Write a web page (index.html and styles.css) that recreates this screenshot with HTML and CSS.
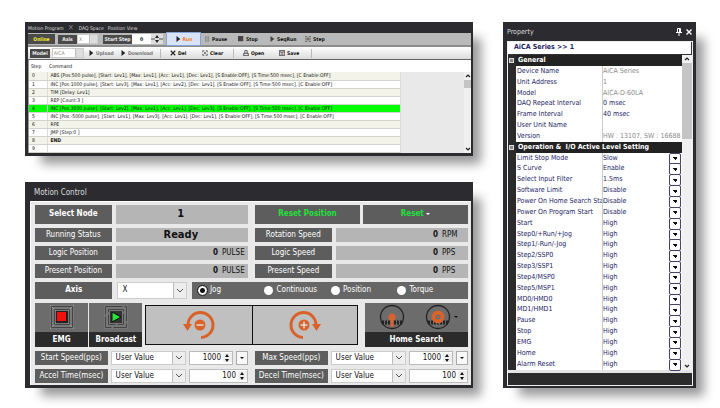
FILE: index.html
```html
<!DOCTYPE html>
<html lang="en">
<head>
<meta charset="utf-8">
<title>Motion Program</title>
<link rel="stylesheet" href="styles.css">
</head>
<body>
<main class="workspace">
  <div class="left">
    <section class="panel program">
      <nav class="tabs"><a href="#program">Motion Program</a><span class="tab-close">×</span><a href="#daq">DAQ Space</a><a href="#position">Position View</a></nav>
      <div class="toolbar toolbar-run">
        <span class="tag online">Online</span>
        <label class="tag tag-axis" for="axis-top">Axis</label>
        <span class="pick pick-axis"><select id="axis-top" class="dim"><option>X</option></select></span>
        <label class="tag tag-step" for="start-step">Start Step</label>
        <input id="start-step" class="step-input" type="text" value="0">
        <span class="stepper"><svg viewBox="0 0 12 10"><path d="M0 5h4M8 5h4" stroke="#555"/><path d="M4 4l2-3 2 3zM4 6l2 3 2-3z" fill="#222"/></svg></span>
        <button class="tool run"><svg viewBox="0 0 8 8"><path d="M2 0l5 4-5 4z" fill="#222"/></svg>Run</button>
        <button class="tool w-pause"><svg viewBox="0 0 8 8"><path d="M2.500 0v8M5.500 0v8" stroke="#666"/></svg>Pause</button>
        <button class="tool w-stop"><svg viewBox="0 0 8 8"><path d="M0 0h7v7H0z" fill="#444"/></svg>Stop</button>
        <button class="tool w-seq"><svg viewBox="0 0 8 8"><path d="M2 0l5 4-5 4z" fill="#444"/></svg>SeqRun</button>
        <button class="tool"><svg viewBox="0 0 8 8"><path d="M0 1h3M5 1h3M0 4h8M0 7h3M5 7h3M4 2v4" stroke="#444" fill="none"/></svg>Step</button>
      </div>
      <div class="toolbar toolbar-file">
        <label class="tag tag-model" for="model">Model</label>
        <span class="pick pick-model"><select id="model" class="dim"><option>AiCA</option></select></span>
        <button class="tool muted w-up"><svg viewBox="0 0 8 8"><path d="M2 0l5 4-5 4z" fill="#222"/></svg>Upload</button>
        <button class="tool muted w-down"><svg viewBox="0 0 8 8"><path d="M2 0l5 4-5 4z" fill="#222"/></svg>Download</button>
        <i class="sep"></i>
        <button class="tool w-del"><svg viewBox="0 0 8 8"><path d="M1 1l6 6M7 1L1 7" stroke="#222" stroke-width="1.500"/></svg>Del</button>
        <button class="tool w-clear"><svg viewBox="0 0 8 8"><path d="M1 3V1h2M5 1h2v2M7 5v2H5M3 7H1V5M3 3l2 2M5 3L3 5" stroke="#333" fill="none"/></svg>Clear</button>
        <i class="sep"></i>
        <button class="tool w-open"><svg viewBox="0 0 8 8"><path d="M2.500 4V.5h3V4M1 4.500h6M1.500 4L.5 7.500h7L6.500 4" stroke="#333" fill="none"/></svg>Open</button>
        <button class="tool w-save"><svg viewBox="0 0 8 8"><path d="M.5.5h7v7h-7zM2.500.5v3h3v-3M2 5.500h4" stroke="#333" fill="none"/></svg>Save</button>
        <i class="sep"></i>
      </div>
      <div class="listing">
        <table class="steps">
          <thead><tr><th>Step</th><th>Command</th></tr></thead>
          <tbody>
            <tr><td>0</td><td>ABS [Pos:500 pulse], [Start: Lev1], [Max: Lev1], [Acc: Lev1], [Dec: Lev1], [S Enable:OFF], [S Time:500 msec], [C Enable:OFF]</td></tr>
            <tr><td>1</td><td>INC [Pos:1000 pulse], [Start: Lev3], [Max: Lev1], [Acc: Lev2], [Dec: Lev1], [S Enable:OFF], [S Time:500 msec], [C Enable:OFF]</td></tr>
            <tr><td>2</td><td>TIM [Delay: Lev1]</td></tr>
            <tr><td>3</td><td>REP [Count:3 ]</td></tr>
            <tr class="current"><td>4</td><td>INC [Pos:3000 pulse], [Start: Lev2], [Max: Lev1], [Acc: Lev1], [Dec: Lev3], [S Enable:OFF], [S Time:500 msec], [C Enable:OFF]</td></tr>
            <tr><td>5</td><td>INC [Pos:-5000 pulse], [Start: Lev1], [Max: Lev3], [Acc: Lev1], [Dec: Lev1], [S Enable:OFF], [S Time:500 msec], [C Enable:OFF]</td></tr>
            <tr><td>6</td><td>RPE</td></tr>
            <tr><td>7</td><td>JMP [Step:0 ]</td></tr>
            <tr><td>8</td><td><b>END</b></td></tr>
            <tr><td>9</td><td></td></tr>
          </tbody>
        </table>
        <div class="blank"></div>
        <div class="scroll scroll-list">
          <svg viewBox="0 0 8 8"><path d="M2 5l2-2 2 2" stroke="#222" fill="none" stroke-width="1.200"/></svg>
          <span class="thumb"></span>
          <svg viewBox="0 0 8 8"><path d="M2 3l2 2 2-2" stroke="#222" fill="none" stroke-width="1.200"/></svg>
        </div>
      </div>
    </section>

    <section class="panel motion">
      <h2 class="motion-title">Motion Control</h2>
      <div class="motion-body">
        <div class="halves tall">
          <div class="pair"><span class="name strong">Select Node</span><output class="val big">1</output></div>
          <div class="resets"><button class="reset">Reset Position</button><button class="reset">Reset <i class="caret light"></i></button></div>
        </div>
        <div class="halves">
          <div class="pair"><span class="name">Running Status</span><output class="val big">Ready</output></div>
          <div class="pair"><span class="name">Rotation Speed</span><output class="val"><b>0</b><span class="unit">RPM</span></output></div>
        </div>
        <div class="halves">
          <div class="pair"><span class="name">Logic Position</span><output class="val"><b>0</b><span class="unit">PULSE</span></output></div>
          <div class="pair"><span class="name">Logic Speed</span><output class="val"><b>0</b><span class="unit">PPS</span></output></div>
        </div>
        <div class="halves">
          <div class="pair"><span class="name">Present Position</span><output class="val"><b>0</b><span class="unit">PULSE</span></output></div>
          <div class="pair"><span class="name">Present Speed</span><output class="val"><b>0</b><span class="unit">PPS</span></output></div>
        </div>
        <div class="axis-row">
          <label class="name strong" for="axis">Axis</label>
          <span class="pick"><select id="axis"><option>X</option></select></span>
          <div class="modes">
            <label><input type="radio" name="mode" checked>Jog</label>
            <label><input type="radio" name="mode">Continuous</label>
            <label><input type="radio" name="mode">Position</label>
            <label><input type="radio" name="mode">Torque</label>
          </div>
        </div>
        <div class="action-row">
          <button class="act"><span class="art"><svg class="ic26" viewBox="0 0 26 26"><path d="M1 1h24v24H1z" fill="#777"/><path d="M1 1l24 24M25 1L1 25" stroke="#999" /><path d="M2.500 2.500h21v21h-21zM5.500 5.500h15v15h-15z" fill="none" stroke="#444"/><path d="M7 7h12v12H7z" fill="#222"/><path d="M8 8h9v9H8z" fill="#f01010"/></svg></span><span class="cap">EMG</span></button>
          <button class="act"><span class="art"><svg class="ic26" viewBox="0 0 26 26"><path d="M1 1h24v24H1z" fill="#777"/><path d="M2.500 2.500h21v21h-21zM5.500 5.500h15v15h-15z" fill="none" stroke="#444" stroke-dasharray="17 2"/><path d="M7 7h12v12H7z" fill="#333"/><path d="M9 8l9 5-9 5z" fill="#2de03a" stroke="#111"/></svg></span><span class="cap">Broadcast</span></button>
          <div class="jog">
            <button aria-label="Jog minus"><svg class="ic34" viewBox="0 0 34 34"><path d="M6 17A12.500 12.500 0 1 1 19 29.500" fill="none" stroke="#d9622b" stroke-width="3"/><path d="M1 16l9 0-4.500 7z" fill="#d9622b"/><circle cx="18" cy="17" r="5.500" fill="#d9622b"/><path d="M14.500 17h7" stroke="#ddd" stroke-width="1.500"/></svg></button>
            <button aria-label="Jog plus"><svg class="ic34" viewBox="0 0 34 34"><path d="M28 17A12.500 12.500 0 1 0 15 29.500" fill="none" stroke="#d9622b" stroke-width="3"/><path d="M24 16h9l-4.500 7z" fill="#d9622b"/><circle cx="16" cy="17" r="5.500" fill="#d9622b"/><path d="M12.500 17h7M16 13.500v7" stroke="#ddd" stroke-width="1.500"/></svg></button>
          </div>
          <div class="act home">
            <span class="art">
              <button aria-label="Home"><svg class="ic26" viewBox="0 0 26 26"><circle cx="13" cy="13" r="11.500" fill="none" stroke="#222" stroke-width="1.300"/><path d="M3 18.500h20" stroke="#222" stroke-width="4" stroke-dasharray="2 1"/><circle cx="13" cy="13" r="3.500" fill="#d9622b"/><path d="M11.500 14h3v9h-3z" fill="#d9622b"/></svg></button>
              <button aria-label="Home options"><svg class="ic26" viewBox="0 0 26 26"><circle cx="13" cy="13" r="11.500" fill="none" stroke="#222" stroke-width="1.300"/><path d="M3 18.500h20" stroke="#222" stroke-width="4" stroke-dasharray="2 1"/><circle cx="13" cy="13" r="4.500" fill="none" stroke="#d9622b" stroke-width="4"/><circle cx="13" cy="13" r="1" fill="#d9622b"/></svg></button>
              <i class="caret"></i>
            </span>
            <span class="cap">Home Search</span>
          </div>
        </div>
        <div class="halves speeds">
          <div class="speed"><label class="name" for="s1">Start Speed(pps)</label><span class="pick"><select id="s1"><option>User Value</option></select></span><span class="num"><input type="text" value="1000" aria-label="Start speed value"><i class="spin"></i></span><button class="more" aria-label="More"><i class="caret"></i></button></div>
          <div class="speed"><label class="name" for="s2">Max Speed(pps)</label><span class="pick"><select id="s2"><option>User Value</option></select></span><span class="num"><input type="text" value="1000" aria-label="Max speed value"><i class="spin"></i></span><button class="more" aria-label="More"><i class="caret"></i></button></div>
        </div>
        <div class="halves speeds">
          <div class="speed"><label class="name" for="s3">Accel Time(msec)</label><span class="pick"><select id="s3"><option>User Value</option></select></span><span class="num wide"><input type="text" value="100" aria-label="Accel time value"><i class="spin"></i></span></div>
          <div class="speed"><label class="name" for="s4">Decel Time(msec)</label><span class="pick"><select id="s4"><option>User Value</option></select></span><span class="num wide"><input type="text" value="100" aria-label="Decel time value"><i class="spin"></i></span></div>
        </div>
      </div>
    </section>
  </div>

  <section class="panel property">
    <header class="prop-title"><h2>Property</h2><svg viewBox="0 0 8 8"><path d="M2.500.5h3v4h-3zM1 4.500h6M4 5v3M4.500 1v3" stroke="#fff" fill="none"/></svg><svg viewBox="0 0 8 8"><path d="M1.500 1.500l5 5M6.500 1.500l-5 5" stroke="#fff" stroke-width="1.400"/></svg></header>
    <div class="prop-frame">
      <h3 class="prop-name">AiCA Series &gt;&gt; 1</h3>
      <div class="prop-main">
        <table class="props">
          <tbody>
            <tr class="group"><th colspan="2"><i class="fold"></i>General</th></tr>
            <tr class="ro"><th>Device Name</th><td>AiCA Series</td></tr>
            <tr class="ro"><th>Unit Address</th><td>1</td></tr>
            <tr class="ro"><th>Model</th><td>AICA-D-60LA</td></tr>
            <tr><th>DAQ Repeat Interval</th><td>0 msec</td></tr>
            <tr><th>Frame Interval</th><td>40 msec</td></tr>
            <tr><th>User Unit Name</th><td></td></tr>
            <tr class="ro"><th>Version</th><td>HW : 13107, SW : 16688</td></tr>
            <tr class="group"><th colspan="2"><i class="fold"></i>Operation &amp;&nbsp; I/O Active Level Setting</th></tr>
            <tr><th><label for="p1">Limit Stop Mode</label></th><td><select id="p1"><option>Slow</option></select></td></tr>
            <tr><th><label for="p2">S Curve</label></th><td><select id="p2"><option>Enable</option></select></td></tr>
            <tr><th><label for="p3">Select Input Filter</label></th><td><select id="p3"><option>1.5ms</option></select></td></tr>
            <tr><th><label for="p4">Software Limit</label></th><td><select id="p4"><option>Disable</option></select></td></tr>
            <tr><th><label for="p5">Power On Home Search Sta</label></th><td><select id="p5"><option>Disable</option></select></td></tr>
            <tr><th><label for="p6">Power On Program Start</label></th><td><select id="p6"><option>Disable</option></select></td></tr>
            <tr><th><label for="p7">Start</label></th><td><select id="p7"><option>High</option></select></td></tr>
            <tr><th><label for="p8">Step0/+Run/+Jog</label></th><td><select id="p8"><option>High</option></select></td></tr>
            <tr><th><label for="p9">Step1/-Run/-Jog</label></th><td><select id="p9"><option>High</option></select></td></tr>
            <tr><th><label for="p10">Step2/SSP0</label></th><td><select id="p10"><option>High</option></select></td></tr>
            <tr><th><label for="p11">Step3/SSP1</label></th><td><select id="p11"><option>High</option></select></td></tr>
            <tr><th><label for="p12">Step4/MSP0</label></th><td><select id="p12"><option>High</option></select></td></tr>
            <tr><th><label for="p13">Step5/MSP1</label></th><td><select id="p13"><option>High</option></select></td></tr>
            <tr><th><label for="p14">MD0/HMD0</label></th><td><select id="p14"><option>High</option></select></td></tr>
            <tr><th><label for="p15">MD1/HMD1</label></th><td><select id="p15"><option>High</option></select></td></tr>
            <tr><th><label for="p16">Pause</label></th><td><select id="p16"><option>High</option></select></td></tr>
            <tr><th><label for="p17">Stop</label></th><td><select id="p17"><option>High</option></select></td></tr>
            <tr><th><label for="p18">EMG</label></th><td><select id="p18"><option>High</option></select></td></tr>
            <tr><th><label for="p19">Home</label></th><td><select id="p19"><option>High</option></select></td></tr>
            <tr><th><label for="p20">Alarm Reset</label></th><td><select id="p20"><option>High</option></select></td></tr>
          </tbody>
        </table>
        <div class="scroll scroll-prop">
          <svg viewBox="0 0 8 8"><path d="M2 5l2-2 2 2" stroke="#222" fill="none" stroke-width="1.200"/></svg>
          <span class="thumb"></span>
          <svg viewBox="0 0 8 8"><path d="M2 3l2 2 2-2" stroke="#222" fill="none" stroke-width="1.200"/></svg>
        </div>
      </div>
      <footer class="prop-foot"></footer>
    </div>
  </section>
</main>
</body>
</html>
```
FILE: styles.css
```css
* { box-sizing: border-box; }
body {
  margin: 0;
  background: #fff;
  color: #111;
  font: 8px/10px "DejaVu Sans Condensed", "DejaVu Sans", sans-serif;
}
h2, h3 { margin: 0; font-size: inherit; font-weight: normal; }
button, input, select {
  margin: 0;
  padding: 0;
  border: 0;
  border-radius: 0;
  min-width: 0;
  background: none;
  color: inherit;
  font: inherit;
  appearance: none;
}
svg { flex: none; }
.workspace {
  display: grid;
  grid-template-columns: 448fr 193fr;
  gap: 30px;
  padding: 22px 24px 20px 25px;
}
.left { display: flex; flex-direction: column; gap: 26px; min-width: 0; }
.panel { background: #2b2b30; box-shadow: 12px 12px 10px -4px rgba(0, 0, 0, .4); min-width: 0; }

/* Program list */
.program { padding: 0 2px 3px 3px; font-size: 5px; line-height: 8px; }
.tabs { display: flex; align-items: center; height: 11px; color: #ddd; }
.tabs a { color: inherit; text-decoration: none; margin-right: 4px; }
.tab-close { margin-right: 5px; color: #888; font-size: 8px; }
.toolbar { display: flex; align-items: center; font-weight: bold; }
.toolbar > * { flex: none; }
.toolbar-run { height: 14px; background: #b9b9b9; border-bottom: 2px solid #8d8d8d; }
.toolbar-file { height: 13px; background: linear-gradient(#fff, #dcdcdc); border-bottom: 1px solid #666; padding-left: 2px; }
.tag { height: 9px; line-height: 9px; background: #4a4a4a; color: #eee; text-align: center; }
.online { width: 27px; height: 10px; line-height: 10px; color: #f4ee2a; margin-right: 3px; }
.tag-axis { width: 19px; }
.tag-step { width: 29px; }
.tag-model { width: 20px; margin-right: 2px; }
.pick { position: relative; display: flex; background: #fff; border: 1px solid #ccc; }
.pick select { width: 100%; padding-left: 4px; }
.pick::after {
  content: "";
  position: absolute;
  top: 0; right: 0; bottom: 0;
  width: 12px;
  pointer-events: none;
  border-left: 1px solid #bbb;
  background: linear-gradient(45deg, transparent 45%, #555 45% 60%, transparent 60%) 3px 50% / 3px 3px no-repeat, linear-gradient(-45deg, transparent 45%, #555 45% 60%, transparent 60%) 6px 50% / 3px 3px no-repeat, #eee;
}
.dim { color: #888; }
.toolbar .pick { height: 10px; line-height: 8px; }
.toolbar .pick select { padding-left: 1px; font-weight: normal; }
.toolbar .pick::after { width: 7px; background: #ddd; }
.pick-axis { width: 21px; margin-right: 5px; }
.pick-model { width: 32px; margin-right: 4px; }
.step-input { width: 19px; height: 10px; background: #fff; text-align: center; }
.stepper { display: flex; width: 12px; height: 10px; background: #ddd; margin-right: 4px; }
.tool { display: flex; align-items: center; gap: 2px; font-weight: bold; white-space: nowrap; height: 12px; }
.tool svg { width: 6px; height: 6px; }
.run { width: 33px; justify-content: center; background: #d8e4f6; outline: 1px solid #86a3d4; color: #f07e2c; margin-right: 4px; }
.w-pause { width: 34px; }
.w-stop { width: 31px; }
.w-seq { width: 36px; }
.muted { color: #777; }
.w-up { width: 32px; }
.w-down { width: 40px; }
.sep { width: 1px; height: 9px; background: #bbb; }
.w-del { width: 32px; margin-left: 9px; }
.w-clear { width: 31px; }
.w-open { width: 36px; margin-left: 9px; }
.w-save { width: 32px; }
.listing { display: grid; grid-template-columns: 373fr 63fr 7px; background: #fff; border-left: 1px solid #999; }
.steps { border-collapse: collapse; table-layout: fixed; width: 100%; white-space: nowrap; }
.steps th { height: 12px; padding: 0 0 0 2px; font-weight: normal; text-align: left; }
.steps th:first-child { width: 18px; }
.steps td { height: 8px; line-height: 7px; padding: 0 0 0 3px; border-bottom: 1px solid #d3d3cd; border-right: 1px solid #ddd; }
.steps tbody tr:nth-child(odd) { background: #f3f3e9; }
.steps tbody tr.current { background: #0f0; }
.blank { margin-top: 12px; background: #e9e9e9; }
.scroll { display: flex; flex-direction: column; align-items: center; justify-content: space-between; background: #f0f0f0; }
.scroll svg { width: 8px; height: 8px; }
.thumb { background: #c4c4c4; width: 100%; }
.scroll-list { margin-top: 12px; }
.scroll-list .thumb { height: 8px; margin-bottom: auto; }

/* Motion control */
.motion { padding: 0 2px 3px 5px; }
.motion-title { height: 19px; line-height: 21px; color: #ddd; padding-left: 4px; }
.motion-body { display: flex; flex-direction: column; gap: 4px; background: #e9e9e9; padding: 3px 3px 2px 4px; border-left: 1px solid #fff; border-top: 1px solid #fff; }
.halves { display: grid; grid-template-columns: 1fr 1fr; gap: 7px; height: 14px; }
.halves.tall { height: 19px; }
.pair { display: grid; grid-template-columns: 77fr 133fr; gap: 4px; }
.name { display: flex; align-items: center; justify-content: center; background: #5d5d5d; color: #fff; white-space: nowrap; min-width: 0; }
.strong { font-weight: bold; }
.val { display: flex; align-items: center; justify-content: flex-end; background: #b5b5b5; gap: 4px; padding-right: 2px; }
.big { justify-content: center; font-size: 11px; font-weight: bold; }
.unit { width: 24px; }
.resets { display: grid; grid-template-columns: 1fr 1fr; gap: 3px; }
.reset { background: #5d5d5d; color: #1fe03a; font-weight: bold; }
.caret { display: inline-block; border: 2px solid transparent; border-top-color: #111; border-bottom: 0; }
.light { border-top-color: #fff; vertical-align: middle; }
.axis-row { display: grid; grid-template-columns: 78fr 70fr 278fr; gap: 5px; height: 17px; }
.modes { display: grid; grid-template-columns: repeat(4, 1fr); align-items: center; padding: 0 4px 0 6px; background: #666; color: #fff; }
.modes label { display: flex; align-items: center; gap: 3px; }
.modes input { width: 9px; height: 9px; border-radius: 50%; background: #fff; }
.modes input:checked { background: radial-gradient(circle, #111 2px, #fff 3px); outline: 1px solid #222; }
.action-row { display: grid; grid-template-columns: 53fr 53fr 219fr 103fr; height: 44px; column-gap: 1px; }
.act { display: flex; flex-direction: column; background: #6c6c6c; color: #fff; font-weight: bold; }
.art { flex: 1; display: flex; align-items: center; justify-content: center; width: 100%; color: #111; }
.art button { display: flex; }
.cap { width: 100%; height: 15px; line-height: 15px; text-align: center; background: #2b2b2b; }
.ic26 { width: 26px; height: 26px; }
.ic34 { width: 34px; height: 34px; }
.jog { display: grid; grid-template-columns: 1fr 1fr; margin: 2px 6px 2px 2px; border: 1px solid #111; background: #c0c0c0; }
.jog button { display: flex; align-items: center; justify-content: center; }
.jog button + button { border-left: 1px solid #111; }
.home .art { gap: 20px; padding-left: 5px; }
.home .caret { margin-left: -17px; }
.speed { display: grid; grid-template-columns: 73fr 76fr 44fr 12px; gap: 3px; }
.speed .num { display: flex; align-items: center; background: #fff; border: 1px solid #bbb; }
.speed .wide { grid-column: span 2; }
.num input { flex: 1; width: 0; text-align: right; }
.spin { width: 9px; height: 9px; margin-left: 2px; background: #eee; display: flex; flex-direction: column; align-items: center; justify-content: center; gap: 2px; }
.spin::before, .spin::after { content: ""; border: 2px solid transparent; }
.spin::before { border-top: 0; border-bottom: 3px solid #111; }
.spin::after { border-bottom: 0; border-top: 3px solid #111; }
.more { background: #f8f8f8; border: 1px solid #aaa; display: flex; align-items: center; justify-content: center; }

/* Property */
.property { display: flex; flex-direction: column; padding: 0 3px 2px 4px; font-size: 7px; color: #1d1d66; }
.prop-title { display: flex; align-items: center; gap: 2px; height: 19px; color: #ddd; }
.prop-title h2 { flex: 1; }
.prop-title svg { width: 8px; height: 8px; }
.prop-frame { flex: 1; display: flex; flex-direction: column; border: 1px solid #eee; }
.prop-name { height: 13px; line-height: 11px; padding-left: 6px; background: #fff; border: 1px solid #333; border-width: 0 1px 1px 0; font-weight: bold; }
.prop-main { flex: 1; display: grid; grid-template-columns: 1fr 10px; background: #fff; }
.props { display: flex; }
.props tbody { flex: 1; display: grid; grid-auto-rows: 1fr; min-width: 0; }
.props tr { display: grid; grid-template-columns: 86fr 80fr; border-left: 8px solid #2b2b2b; min-width: 0; }
.props th, .props td { padding: 0 0 0 1px; font-weight: normal; text-align: left; white-space: nowrap; min-width: 0; }
.props td { position: relative; padding-left: 0; border-left: 1px solid #ccc; }
.props .ro td { color: #8a8a8a; }
.props .group { background: #222; }
.props .group th { position: relative; grid-column: span 2; margin-left: -8px; padding-left: 10px; color: #fff; font-weight: bold; }
.fold { position: absolute; left: 1px; top: 3px; width: 5px; height: 5px; border: 1px solid #ddd; background: #888; }
.props select { width: 100%; display: block; }
.props td:has(select)::after {
  content: "";
  position: absolute;
  top: 0; right: 1px;
  width: 10px; height: 10px;
  border: 1px solid #44446a;
  border-radius: 2px;
  background: conic-gradient(from -45deg at 50% 100%, #111 90deg, transparent 0) 50% 50% / 4px 3px no-repeat, #fff;
  pointer-events: none;
}
.scroll-prop .thumb { height: 76px; margin-bottom: auto; }
.prop-foot { height: 15px; border-top: 3px solid #e4e4e4; background: #2b2b2b; }
```
